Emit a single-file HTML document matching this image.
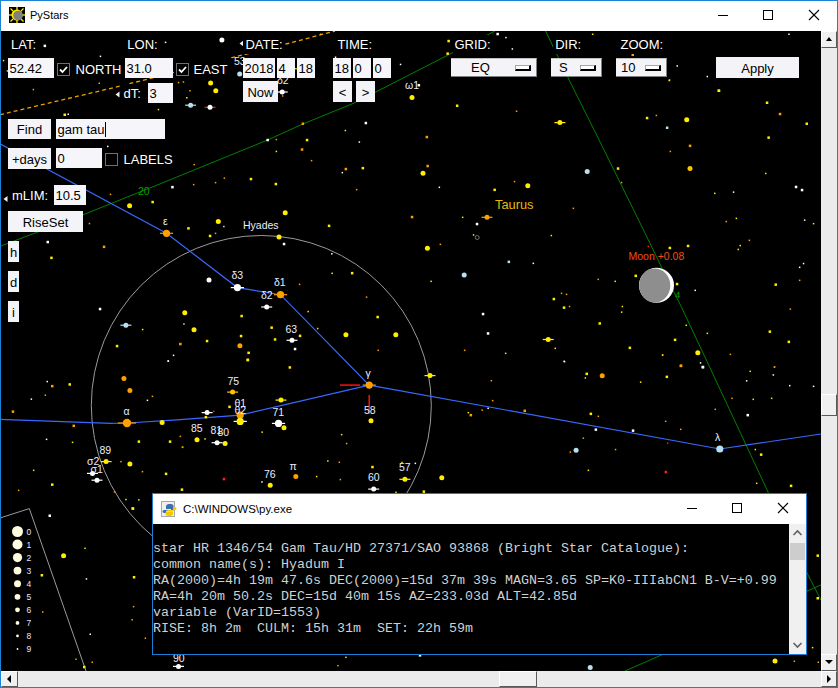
<!DOCTYPE html>
<html><head><meta charset="utf-8"><title>PyStars</title><style>
*{box-sizing:border-box}
html,body{margin:0;padding:0}
body{width:838px;height:688px;overflow:hidden;position:relative;background:#000;font-family:"Liberation Sans",sans-serif}
.a{position:absolute}
.lbl{position:absolute;color:#fff;font-size:13px;line-height:13px;white-space:nowrap;background:#000;padding:3px 2px;margin:-3px 0 0 -2px}
.ent{position:absolute;background:#f5f5fa;color:#000;font-size:13px;white-space:nowrap;padding-left:1.5px;overflow:hidden}
.btn{position:absolute;background:#f3f3f8;color:#000;font-size:13px;text-align:center;white-space:nowrap}
.chk{position:absolute;width:13px;height:13px;border:1px solid #707070;background:#000}
.om{position:absolute;background:#f3f3f8;border-top:1px solid #c0c0c0;border-right:1px solid #808080;border-bottom:1px solid #808080;color:#000;font-size:13px;white-space:nowrap}
.ind{position:absolute;width:16px;height:6px;border-top:1px solid #a8a8a8;border-left:1px solid #a8a8a8;border-right:2px solid #000;border-bottom:2px solid #000;background:#fff}
.mono{font-family:"Liberation Mono",monospace}
</style></head>
<body>
<svg width="838" height="688" viewBox="0 0 838 688" style="position:absolute;left:0;top:0" font-family="Liberation Sans, sans-serif">
<polyline points="0,114.7 115.6,87.2 288,43.5 335,31" fill="none" stroke="#f0a000" stroke-width="1.3" stroke-dasharray="4,3"/>
<polyline points="0,246.3 84,214.4 157,185.1 267.6,140 302.7,124 354.3,103 449,54.5 495,31" fill="none" stroke="#008000" stroke-width="1"/>
<polyline points="545.5,31 569.2,80 600,141.8 643,229 662.7,269.5 681,306.2 704,355 768.4,492.8 808,574.9 821,600" fill="none" stroke="#008000" stroke-width="1"/>
<line x1="625" y1="671" x2="830" y2="581" stroke="#008000" stroke-width="1"/>
<text x="138" y="195" font-size="10.5" fill="#00a000">20</text>
<text x="675" y="298" font-size="9.5" fill="#00a000">4</text>
<circle cx="261.3" cy="405.5" r="170" fill="none" stroke="#9a9a9a" stroke-width="1"/>
<polyline points="0,518 29.3,508.6 86,671" fill="none" stroke="#9a9a9a" stroke-width="1"/>
<polyline points="0,143.9 166.5,233.3 237.4,287.6 280.5,294.7 369.2,385.1 719.8,449 821,434" fill="none" stroke="#3868ff" stroke-width="1.2"/>
<polyline points="0,419.4 111,423.3 127,423 176.9,419.9 240.2,415.1 369.2,385.1" fill="none" stroke="#3868ff" stroke-width="1.2"/>
<line x1="340" y1="385.1" x2="360" y2="385.1" stroke="#ff1010" stroke-width="1.5"/>
<line x1="369.2" y1="395" x2="369.2" y2="414" stroke="#ff1010" stroke-width="1.5"/>
<rect x="43.6" y="44.6" width="2.5" height="2.5" fill="#ffffff"/>
<rect x="2.8" y="59.8" width="1.5" height="1.5" fill="#ffee00"/>
<rect x="6.7" y="70.2" width="1.5" height="1.5" fill="#ffee00"/>
<rect x="32.6" y="88.8" width="1.5" height="1.5" fill="#ffa000"/>
<rect x="98.5" y="82.5" width="1.5" height="1.5" fill="#ffa000"/>
<rect x="99.7" y="55.6" width="1.5" height="1.5" fill="#ffffff"/>
<rect x="63.5" y="113.5" width="2.5" height="2.5" fill="#ffee00"/>
<rect x="67.5" y="113.5" width="1.5" height="1.5" fill="#ffffff"/>
<rect x="164.8" y="41.6" width="1.5" height="1.5" fill="#ffffff"/>
<circle cx="221.9" cy="39.9" r="2.5" fill="#ffffff"/>
<circle cx="239.7" cy="73.9" r="2.5" fill="#b8e0f0"/>
<circle cx="210.6" cy="83.0" r="2.5" fill="#ffee00"/>
<circle cx="215.8" cy="90.7" r="2.5" fill="#ffee00"/>
<line x1="185.1" y1="105.2" x2="196.1" y2="105.2" stroke="#b8e0f0" stroke-width="1.2"/>
<circle cx="190.6" cy="105.2" r="2.5" fill="#b8e0f0"/>
<line x1="204.5" y1="107.3" x2="215.5" y2="107.3" stroke="#ff2020" stroke-width="1.2"/>
<circle cx="210.0" cy="107.3" r="2.5" fill="#ffffff"/>
<line x1="276.7" y1="92.0" x2="287.7" y2="92.0" stroke="#ffffff" stroke-width="1.2"/>
<circle cx="282.2" cy="92.0" r="2.5" fill="#ffffff"/>
<rect x="281.9" y="95.2" width="1.5" height="1.5" fill="#ffa000"/>
<rect x="295.2" y="68.0" width="1.5" height="1.5" fill="#ffee00"/>
<rect x="177.8" y="81.8" width="1.5" height="1.5" fill="#ffa000"/>
<rect x="182.7" y="81.2" width="1.5" height="1.5" fill="#ffa000"/>
<rect x="189.2" y="90.0" width="1.5" height="1.5" fill="#ffa000"/>
<rect x="186.1" y="97.0" width="1.5" height="1.5" fill="#ffee00"/>
<rect x="157.7" y="108.8" width="1.5" height="1.5" fill="#ffee00"/>
<rect x="107.0" y="145.7" width="1.5" height="1.5" fill="#ffffff"/>
<rect x="334.8" y="56.5" width="1.5" height="1.5" fill="#ffffff"/>
<rect x="319.9" y="33.5" width="1.5" height="1.5" fill="#ffa000"/>
<rect x="399.8" y="63.7" width="1.5" height="1.5" fill="#ffffff"/>
<rect x="417.6" y="84.0" width="2.5" height="2.5" fill="#ffffff"/>
<circle cx="412.0" cy="97.5" r="2.5" fill="#ffee00"/>
<rect x="455.9" y="104.5" width="2.5" height="2.5" fill="#ffee00"/>
<rect x="515.8" y="110.5" width="1.5" height="1.5" fill="#ffa000"/>
<line x1="554.4" y1="122.6" x2="565.4" y2="122.6" stroke="#ffee00" stroke-width="1.2"/>
<circle cx="559.9" cy="122.6" r="2.5" fill="#ffee00"/>
<rect x="425.6" y="135.8" width="2.5" height="2.5" fill="#ffa000"/>
<rect x="426.4" y="164.8" width="2.5" height="2.5" fill="#ffa000"/>
<circle cx="423.0" cy="173.2" r="2.5" fill="#ffee00"/>
<rect x="438.6" y="186.6" width="1.5" height="1.5" fill="#ffffff"/>
<rect x="513.8" y="180.8" width="1.5" height="1.5" fill="#ffa000"/>
<rect x="493.4" y="188.6" width="2.5" height="2.5" fill="#ffee00"/>
<circle cx="527.8" cy="185.8" r="2.5" fill="#ffee00"/>
<circle cx="587.2" cy="171.5" r="2.5" fill="#b8e0f0"/>
<rect x="572.6" y="207.6" width="1.5" height="1.5" fill="#ffa000"/>
<rect x="410.8" y="215.8" width="2.5" height="2.5" fill="#ffa000"/>
<rect x="461.9" y="216.6" width="1.5" height="1.5" fill="#ffee00"/>
<line x1="481.5" y1="217.3" x2="492.5" y2="217.3" stroke="#ffa000" stroke-width="1.2"/>
<circle cx="487.0" cy="217.3" r="2.5" fill="#ffa000"/>
<rect x="475.8" y="222.8" width="2.5" height="2.5" fill="#ffffff"/>
<rect x="668.5" y="79.8" width="1.5" height="1.5" fill="#ffee00"/>
<rect x="717.8" y="89.5" width="2.5" height="2.5" fill="#ffee00"/>
<rect x="765.8" y="101.5" width="2.5" height="2.5" fill="#ffee00"/>
<rect x="778.8" y="112.8" width="2.5" height="2.5" fill="#ffa000"/>
<rect x="805.5" y="122.5" width="2.5" height="2.5" fill="#ffee00"/>
<rect x="645.8" y="116.8" width="2.5" height="2.5" fill="#ffee00"/>
<rect x="655.6" y="114.7" width="1.5" height="1.5" fill="#ffa000"/>
<circle cx="686.7" cy="119.7" r="2.5" fill="#ffee00"/>
<rect x="665.9" y="126.5" width="2.5" height="2.5" fill="#b8e0f0"/>
<rect x="767.4" y="136.4" width="2.5" height="2.5" fill="#ffee00"/>
<rect x="688.8" y="144.6" width="2.5" height="2.5" fill="#ffa000"/>
<rect x="669.6" y="150.7" width="1.5" height="1.5" fill="#ffa000"/>
<rect x="616.8" y="167.3" width="2.5" height="2.5" fill="#ffee00"/>
<circle cx="690.0" cy="168.6" r="2.5" fill="#ffc400"/>
<rect x="620.8" y="181.8" width="1.5" height="1.5" fill="#ffa000"/>
<rect x="765.0" y="172.7" width="1.5" height="1.5" fill="#ffee00"/>
<rect x="794.8" y="185.7" width="2.5" height="2.5" fill="#ffffff"/>
<rect x="800.8" y="188.8" width="2.5" height="2.5" fill="#ffffff"/>
<rect x="714.0" y="192.6" width="1.5" height="1.5" fill="#ffee00"/>
<rect x="732.8" y="191.4" width="1.5" height="1.5" fill="#ffffff"/>
<rect x="725.5" y="220.8" width="1.5" height="1.5" fill="#ffa000"/>
<rect x="735.6" y="217.6" width="1.5" height="1.5" fill="#ffee00"/>
<rect x="803.9" y="219.4" width="1.5" height="1.5" fill="#ffffff"/>
<rect x="812.8" y="222.9" width="1.5" height="1.5" fill="#ffee00"/>
<rect x="447.4" y="39.8" width="2.5" height="2.5" fill="#ffee00"/>
<rect x="496.4" y="32.8" width="2.5" height="2.5" fill="#ffffff"/>
<rect x="511.6" y="48.2" width="1.5" height="1.5" fill="#ffffff"/>
<rect x="505.2" y="36.8" width="1.5" height="1.5" fill="#ffffff"/>
<rect x="528.5" y="61.9" width="1.5" height="1.5" fill="#ffffff"/>
<rect x="446.4" y="52.4" width="2.5" height="2.5" fill="#ffee00"/>
<rect x="592.2" y="60.2" width="1.5" height="1.5" fill="#ffee00"/>
<rect x="631.5" y="53.5" width="2.5" height="2.5" fill="#ffa000"/>
<rect x="591.9" y="33.5" width="1.5" height="1.5" fill="#ffee00"/>
<rect x="676.5" y="65.2" width="1.5" height="1.5" fill="#ffffff"/>
<rect x="668.8" y="79.3" width="1.5" height="1.5" fill="#ffee00"/>
<rect x="706.6" y="75.8" width="1.5" height="1.5" fill="#ffffff"/>
<rect x="717.5" y="89.5" width="2.5" height="2.5" fill="#ffee00"/>
<rect x="788.2" y="33.5" width="1.5" height="1.5" fill="#ffffff"/>
<circle cx="129.6" cy="205.8" r="2.5" fill="#ffee00"/>
<rect x="151.4" y="200.8" width="2.5" height="2.5" fill="#ffee00"/>
<rect x="171.2" y="185.9" width="2.5" height="2.5" fill="#ffffff"/>
<rect x="192.9" y="183.9" width="1.5" height="1.5" fill="#ffa000"/>
<rect x="109.7" y="193.6" width="1.5" height="1.5" fill="#ffa000"/>
<rect x="88.7" y="222.8" width="1.5" height="1.5" fill="#ffa000"/>
<rect x="187.2" y="227.1" width="2.5" height="2.5" fill="#ffee00"/>
<rect x="46.5" y="240.8" width="2.5" height="2.5" fill="#ffffff"/>
<rect x="102.8" y="245.6" width="2.5" height="2.5" fill="#ffa000"/>
<rect x="50.2" y="256.6" width="2.5" height="2.5" fill="#ffee00"/>
<rect x="193.4" y="163.9" width="1.5" height="1.5" fill="#ffa000"/>
<rect x="364.6" y="121.8" width="2.5" height="2.5" fill="#ffffff"/>
<rect x="301.6" y="122.5" width="2.5" height="2.5" fill="#ffa000"/>
<rect x="344.6" y="129.8" width="1.5" height="1.5" fill="#ffee00"/>
<rect x="266.4" y="138.8" width="2.5" height="2.5" fill="#ffffff"/>
<rect x="275.6" y="138.8" width="1.5" height="1.5" fill="#ffa000"/>
<rect x="305.8" y="138.8" width="2.5" height="2.5" fill="#ffee00"/>
<rect x="358.6" y="141.3" width="1.5" height="1.5" fill="#ffffff"/>
<rect x="300.8" y="148.3" width="2.5" height="2.5" fill="#ffa000"/>
<rect x="275.6" y="150.7" width="1.5" height="1.5" fill="#ffee00"/>
<rect x="310.8" y="159.9" width="1.5" height="1.5" fill="#ffa000"/>
<rect x="344.6" y="167.8" width="2.5" height="2.5" fill="#ffa000"/>
<rect x="361.6" y="166.9" width="2.5" height="2.5" fill="#ffee00"/>
<rect x="341.6" y="171.9" width="1.5" height="1.5" fill="#ffffff"/>
<rect x="355.9" y="188.9" width="1.5" height="1.5" fill="#ffa000"/>
<rect x="214.8" y="181.9" width="1.5" height="1.5" fill="#ffa000"/>
<rect x="223.6" y="177.4" width="1.5" height="1.5" fill="#ffa000"/>
<rect x="249.7" y="177.8" width="2.5" height="2.5" fill="#ffee00"/>
<rect x="274.6" y="182.8" width="2.5" height="2.5" fill="#ffee00"/>
<circle cx="285.2" cy="212.8" r="2.5" fill="#ffee00"/>
<circle cx="218.3" cy="221.6" r="2.5" fill="#ffee00"/>
<rect x="223.1" y="225.8" width="1.5" height="1.5" fill="#b8e0f0"/>
<rect x="208.8" y="234.7" width="2.5" height="2.5" fill="#ffee00"/>
<rect x="214.8" y="232.6" width="1.5" height="1.5" fill="#ffa000"/>
<rect x="327.8" y="224.6" width="2.5" height="2.5" fill="#ffee00"/>
<circle cx="279.0" cy="237.1" r="2.5" fill="#ffee00"/>
<rect x="282.8" y="242.8" width="2.5" height="2.5" fill="#ffffff"/>
<line x1="159.9" y1="233.3" x2="173.1" y2="233.3" stroke="#ffa000" stroke-width="1.2"/>
<circle cx="166.5" cy="233.3" r="3.6" fill="#ffa000"/>
<line x1="230.8" y1="287.6" x2="244.0" y2="287.6" stroke="#ffffff" stroke-width="1.2"/>
<circle cx="237.4" cy="287.6" r="3.6" fill="#ffffff"/>
<line x1="273.9" y1="294.7" x2="287.1" y2="294.7" stroke="#ffa000" stroke-width="1.2"/>
<circle cx="280.5" cy="294.7" r="3.6" fill="#ffa000"/>
<line x1="261.2" y1="307.0" x2="272.2" y2="307.0" stroke="#ffffff" stroke-width="1.2"/>
<circle cx="266.7" cy="307.0" r="2.5" fill="#ffffff"/>
<circle cx="209.0" cy="280.1" r="2.5" fill="#ffffff"/>
<rect x="103.0" y="246.2" width="1.5" height="1.5" fill="#ffa000"/>
<rect x="98.8" y="307.8" width="2.5" height="2.5" fill="#ffffff"/>
<line x1="120.4" y1="325.2" x2="131.4" y2="325.2" stroke="#b8e0f0" stroke-width="1.2"/>
<circle cx="125.9" cy="325.2" r="2.5" fill="#b8e0f0"/>
<circle cx="184.8" cy="312.7" r="2.5" fill="#ffee00"/>
<rect x="183.2" y="323.2" width="1.5" height="1.5" fill="#b8e0f0"/>
<circle cx="194.0" cy="329.7" r="2.5" fill="#ffee00"/>
<rect x="141.9" y="328.8" width="1.5" height="1.5" fill="#ffee00"/>
<rect x="115.8" y="344.8" width="2.5" height="2.5" fill="#ffee00"/>
<rect x="179.1" y="342.8" width="2.5" height="2.5" fill="#ffa000"/>
<rect x="205.8" y="339.8" width="2.5" height="2.5" fill="#ffee00"/>
<rect x="240.4" y="314.8" width="2.5" height="2.5" fill="#ffee00"/>
<rect x="239.8" y="334.8" width="2.5" height="2.5" fill="#ffee00"/>
<circle cx="239.9" cy="345.8" r="2.5" fill="#ffa000"/>
<rect x="247.4" y="351.6" width="2.5" height="2.5" fill="#ffee00"/>
<rect x="246.7" y="358.6" width="2.5" height="2.5" fill="#ffee00"/>
<rect x="172.8" y="354.6" width="1.5" height="1.5" fill="#ffffff"/>
<rect x="167.4" y="360.2" width="1.5" height="1.5" fill="#ffffff"/>
<rect x="270.4" y="326.4" width="2.5" height="2.5" fill="#ffee00"/>
<rect x="273.8" y="338.2" width="2.5" height="2.5" fill="#ffee00"/>
<circle cx="123.9" cy="378.6" r="2.5" fill="#ffa000"/>
<rect x="331.1" y="253.1" width="1.5" height="1.5" fill="#ffffff"/>
<rect x="331.4" y="272.6" width="1.5" height="1.5" fill="#ffee00"/>
<rect x="350.9" y="271.9" width="2.5" height="2.5" fill="#ffee00"/>
<rect x="298.8" y="283.6" width="1.5" height="1.5" fill="#ffa000"/>
<rect x="365.8" y="296.4" width="1.5" height="1.5" fill="#ffa000"/>
<rect x="307.4" y="310.8" width="1.5" height="1.5" fill="#ffee00"/>
<rect x="376.4" y="315.8" width="2.5" height="2.5" fill="#ffee00"/>
<line x1="286.5" y1="340.3" x2="297.5" y2="340.3" stroke="#ffffff" stroke-width="1.2"/>
<circle cx="292.0" cy="340.3" r="2.5" fill="#ffffff"/>
<rect x="298.8" y="334.6" width="2.5" height="2.5" fill="#ffee00"/>
<rect x="293.8" y="347.8" width="2.5" height="2.5" fill="#ffffff"/>
<rect x="316.9" y="327.8" width="1.5" height="1.5" fill="#ffee00"/>
<circle cx="345.9" cy="334.8" r="2.5" fill="#ffee00"/>
<circle cx="395.8" cy="334.8" r="2.5" fill="#ffee00"/>
<rect x="377.4" y="349.6" width="1.5" height="1.5" fill="#ffa000"/>
<rect x="288.6" y="366.2" width="2.5" height="2.5" fill="#ffee00"/>
<circle cx="427.4" cy="248.3" r="2.5" fill="#ffee00"/>
<rect x="439.6" y="243.6" width="1.5" height="1.5" fill="#ffa000"/>
<circle cx="464.2" cy="275.1" r="2.5" fill="#b8e0f0"/>
<rect x="430.4" y="280.6" width="1.5" height="1.5" fill="#ffee00"/>
<rect x="481.8" y="312.8" width="2.5" height="2.5" fill="#ffffff"/>
<rect x="486.8" y="332.2" width="2.5" height="2.5" fill="#ffffff"/>
<rect x="463.9" y="349.6" width="1.5" height="1.5" fill="#ffa000"/>
<rect x="472.8" y="234.2" width="1.5" height="1.5" fill="#ffee00"/>
<rect x="507.6" y="260.6" width="2.5" height="2.5" fill="#b8e0f0"/>
<rect x="532.6" y="262.6" width="1.5" height="1.5" fill="#ffffff"/>
<rect x="550.6" y="234.8" width="1.5" height="1.5" fill="#ffee00"/>
<rect x="597.5" y="278.6" width="1.5" height="1.5" fill="#ffa000"/>
<rect x="614.5" y="280.6" width="1.5" height="1.5" fill="#ffee00"/>
<rect x="560.8" y="292.6" width="1.5" height="1.5" fill="#ffa000"/>
<rect x="565.8" y="293.6" width="1.5" height="1.5" fill="#ffa000"/>
<rect x="552.6" y="297.8" width="2.5" height="2.5" fill="#ffee00"/>
<rect x="562.8" y="306.4" width="2.5" height="2.5" fill="#ffee00"/>
<rect x="568.8" y="305.8" width="1.5" height="1.5" fill="#ffa000"/>
<rect x="621.6" y="305.8" width="1.5" height="1.5" fill="#ffee00"/>
<rect x="620.9" y="311.4" width="1.5" height="1.5" fill="#ffee00"/>
<rect x="598.5" y="322.2" width="2.5" height="2.5" fill="#ffee00"/>
<line x1="542.7" y1="339.5" x2="553.7" y2="339.5" stroke="#ffee00" stroke-width="1.2"/>
<circle cx="548.2" cy="339.5" r="2.5" fill="#ffee00"/>
<rect x="554.5" y="347.6" width="1.5" height="1.5" fill="#ffee00"/>
<rect x="504.9" y="352.6" width="1.5" height="1.5" fill="#ffee00"/>
<rect x="563.8" y="360.9" width="1.5" height="1.5" fill="#ffffff"/>
<rect x="628.6" y="346.6" width="2.5" height="2.5" fill="#ffee00"/>
<rect x="673.8" y="338.6" width="2.5" height="2.5" fill="#ffee00"/>
<rect x="661.8" y="354.6" width="1.5" height="1.5" fill="#ffa000"/>
<rect x="679.8" y="364.6" width="2.5" height="2.5" fill="#ffa000"/>
<rect x="685.5" y="324.6" width="1.5" height="1.5" fill="#ffee00"/>
<rect x="634.5" y="274.6" width="2.5" height="2.5" fill="#ffee00"/>
<rect x="668.6" y="246.7" width="2.5" height="2.5" fill="#ffee00"/>
<rect x="686.8" y="244.7" width="2.5" height="2.5" fill="#ffee00"/>
<rect x="675.8" y="282.8" width="2.5" height="2.5" fill="#ffee00"/>
<rect x="647.5" y="245.7" width="1.5" height="1.5" fill="#ff2020"/>
<rect x="694.5" y="289.6" width="1.5" height="1.5" fill="#ffffff"/>
<rect x="748.6" y="239.6" width="1.5" height="1.5" fill="#ffa000"/>
<rect x="739.5" y="244.8" width="1.5" height="1.5" fill="#ffee00"/>
<rect x="737.5" y="248.7" width="1.5" height="1.5" fill="#ffee00"/>
<rect x="802.8" y="262.8" width="1.5" height="1.5" fill="#ffffff"/>
<rect x="798.9" y="266.6" width="1.5" height="1.5" fill="#ffffff"/>
<rect x="798.9" y="279.6" width="1.5" height="1.5" fill="#ffa000"/>
<rect x="774.5" y="283.4" width="2.5" height="2.5" fill="#ffee00"/>
<rect x="789.6" y="308.4" width="1.5" height="1.5" fill="#ffa000"/>
<rect x="706.6" y="332.6" width="1.5" height="1.5" fill="#ffee00"/>
<rect x="768.6" y="330.4" width="2.5" height="2.5" fill="#ffee00"/>
<rect x="787.6" y="340.6" width="2.5" height="2.5" fill="#ffee00"/>
<circle cx="697.8" cy="352.7" r="2.5" fill="#ffee00"/>
<rect x="729.6" y="353.6" width="1.5" height="1.5" fill="#ffa000"/>
<rect x="699.8" y="362.2" width="1.5" height="1.5" fill="#ffffff"/>
<rect x="701.8" y="365.9" width="2.5" height="2.5" fill="#ffffff"/>
<rect x="773.6" y="366.4" width="1.5" height="1.5" fill="#ffa000"/>
<line x1="362.6" y1="385.1" x2="375.8" y2="385.1" stroke="#ffa000" stroke-width="1.2"/>
<circle cx="369.2" cy="385.1" r="3.6" fill="#ffa000"/>
<circle cx="371.0" cy="420.7" r="2.5" fill="#ffee00"/>
<line x1="227.1" y1="392.1" x2="238.1" y2="392.1" stroke="#ffc400" stroke-width="1.2"/>
<circle cx="232.6" cy="392.1" r="2.5" fill="#ffc400"/>
<rect x="228.3" y="405.6" width="2.5" height="2.5" fill="#ffee00"/>
<circle cx="240.2" cy="415.1" r="3.6" fill="#ffa000"/>
<line x1="233.6" y1="421.4" x2="246.8" y2="421.4" stroke="#ffffff" stroke-width="1.2"/>
<circle cx="240.2" cy="421.4" r="3.6" fill="#ffee00"/>
<line x1="201.6" y1="412.6" x2="212.6" y2="412.6" stroke="#ffffff" stroke-width="1.2"/>
<circle cx="207.1" cy="412.6" r="2.5" fill="#ffffff"/>
<rect x="213.1" y="410.6" width="1.5" height="1.5" fill="#ff2020"/>
<rect x="204.6" y="415.9" width="2.5" height="2.5" fill="#ffee00"/>
<line x1="275.5" y1="400.1" x2="286.5" y2="400.1" stroke="#ffee00" stroke-width="1.2"/>
<circle cx="281.0" cy="400.1" r="2.5" fill="#ffee00"/>
<line x1="271.9" y1="423.4" x2="285.1" y2="423.4" stroke="#ffffff" stroke-width="1.2"/>
<circle cx="278.5" cy="423.4" r="3.6" fill="#ffffff"/>
<circle cx="284.0" cy="427.7" r="2.5" fill="#ffee00"/>
<circle cx="197.0" cy="439.7" r="2.5" fill="#ffee00"/>
<rect x="204.3" y="438.2" width="1.5" height="1.5" fill="#ffee00"/>
<line x1="211.6" y1="442.7" x2="222.6" y2="442.7" stroke="#ffffff" stroke-width="1.2"/>
<circle cx="217.1" cy="442.7" r="2.5" fill="#ffffff"/>
<circle cx="225.1" cy="443.5" r="2.5" fill="#ffee00"/>
<rect x="261.4" y="431.4" width="1.5" height="1.5" fill="#ffee00"/>
<rect x="340.9" y="433.9" width="1.5" height="1.5" fill="#ffee00"/>
<rect x="345.9" y="442.8" width="1.5" height="1.5" fill="#ffa000"/>
<rect x="327.1" y="460.2" width="1.5" height="1.5" fill="#ffee00"/>
<rect x="338.6" y="461.6" width="1.5" height="1.5" fill="#ffa000"/>
<circle cx="295.8" cy="476.5" r="2.5" fill="#ffa000"/>
<circle cx="270.2" cy="485.3" r="2.5" fill="#ffee00"/>
<rect x="261.2" y="481.2" width="1.5" height="1.5" fill="#ffffff"/>
<rect x="222.7" y="477.8" width="2.5" height="2.5" fill="#ff2020"/>
<rect x="315.9" y="475.8" width="1.5" height="1.5" fill="#ffee00"/>
<rect x="339.6" y="478.8" width="1.5" height="1.5" fill="#ffa000"/>
<rect x="371.2" y="465.8" width="2.5" height="2.5" fill="#ffee00"/>
<line x1="368.2" y1="489.1" x2="379.2" y2="489.1" stroke="#ffffff" stroke-width="1.2"/>
<circle cx="373.7" cy="489.1" r="2.5" fill="#ffffff"/>
<rect x="181.2" y="488.9" width="1.5" height="1.5" fill="#ffee00"/>
<rect x="181.8" y="446.4" width="1.5" height="1.5" fill="#ffee00"/>
<rect x="246.4" y="358.8" width="2.5" height="2.5" fill="#ffee00"/>
<line x1="117.8" y1="423.0" x2="136.2" y2="423.0" stroke="#ffa000" stroke-width="1.2"/>
<circle cx="127.0" cy="423.0" r="4.2" fill="#ffa000"/>
<circle cx="162.1" cy="422.4" r="2.5" fill="#ffee00"/>
<circle cx="129.9" cy="390.6" r="2.5" fill="#ffa000"/>
<rect x="146.7" y="399.6" width="1.5" height="1.5" fill="#ffffff"/>
<rect x="151.7" y="395.6" width="1.5" height="1.5" fill="#ffa000"/>
<rect x="167.6" y="360.4" width="1.5" height="1.5" fill="#ffffff"/>
<rect x="46.5" y="380.8" width="1.5" height="1.5" fill="#ffffff"/>
<rect x="51.0" y="384.9" width="2.5" height="2.5" fill="#ffa000"/>
<rect x="68.5" y="383.2" width="2.5" height="2.5" fill="#ffee00"/>
<rect x="44.6" y="394.4" width="1.5" height="1.5" fill="#ffa000"/>
<rect x="30.6" y="398.4" width="1.5" height="1.5" fill="#ffffff"/>
<rect x="11.7" y="410.4" width="2.5" height="2.5" fill="#ffa000"/>
<rect x="72.5" y="424.6" width="2.5" height="2.5" fill="#ffa000"/>
<rect x="45.8" y="438.6" width="1.5" height="1.5" fill="#ffffff"/>
<rect x="71.8" y="441.6" width="1.5" height="1.5" fill="#ffee00"/>
<rect x="137.6" y="440.4" width="2.5" height="2.5" fill="#ffee00"/>
<rect x="168.8" y="440.4" width="2.5" height="2.5" fill="#ffee00"/>
<rect x="179.6" y="435.6" width="1.5" height="1.5" fill="#ffa000"/>
<rect x="181.8" y="446.6" width="1.5" height="1.5" fill="#ffa000"/>
<line x1="100.6" y1="461.6" x2="111.6" y2="461.6" stroke="#ffee00" stroke-width="1.2"/>
<circle cx="106.1" cy="461.6" r="2.5" fill="#ffee00"/>
<line x1="87.0" y1="473.4" x2="98.0" y2="473.4" stroke="#ffffff" stroke-width="1.2"/>
<circle cx="92.5" cy="473.4" r="2.5" fill="#ffffff"/>
<line x1="91.5" y1="480.2" x2="102.5" y2="480.2" stroke="#ffffff" stroke-width="1.2"/>
<circle cx="97.0" cy="480.2" r="2.5" fill="#ffffff"/>
<rect x="120.2" y="460.9" width="1.5" height="1.5" fill="#ffa000"/>
<circle cx="129.9" cy="463.9" r="2.5" fill="#ffee00"/>
<rect x="141.7" y="470.9" width="1.5" height="1.5" fill="#ffa000"/>
<rect x="164.8" y="472.6" width="2.5" height="2.5" fill="#ffee00"/>
<rect x="32.9" y="469.6" width="1.5" height="1.5" fill="#ffee00"/>
<rect x="51.0" y="483.4" width="2.5" height="2.5" fill="#ffee00"/>
<rect x="17.9" y="489.6" width="1.5" height="1.5" fill="#ffa000"/>
<rect x="180.7" y="488.4" width="2.5" height="2.5" fill="#ffee00"/>
<rect x="138.1" y="499.1" width="1.5" height="1.5" fill="#ffee00"/>
<rect x="113.8" y="491.2" width="1.5" height="1.5" fill="#ffa000"/>
<rect x="125.2" y="498.8" width="1.5" height="1.5" fill="#ffee00"/>
<rect x="131.4" y="507.2" width="2.5" height="2.5" fill="#ffee00"/>
<rect x="48.5" y="514.5" width="2.5" height="2.5" fill="#ffffff"/>
<circle cx="63.6" cy="555.8" r="2.5" fill="#ffee00"/>
<rect x="84.3" y="547.6" width="1.5" height="1.5" fill="#ffee00"/>
<rect x="40.6" y="574.0" width="2.5" height="2.5" fill="#ffee00"/>
<rect x="85.7" y="578.2" width="1.5" height="1.5" fill="#ffffff"/>
<rect x="132.8" y="576.0" width="2.5" height="2.5" fill="#ffee00"/>
<rect x="42.0" y="611.2" width="1.5" height="1.5" fill="#ffa000"/>
<rect x="132.8" y="605.9" width="1.5" height="1.5" fill="#ffa000"/>
<rect x="131.4" y="619.0" width="1.5" height="1.5" fill="#ffa000"/>
<rect x="89.5" y="633.5" width="1.5" height="1.5" fill="#ffffff"/>
<rect x="144.6" y="637.5" width="1.5" height="1.5" fill="#ffa000"/>
<rect x="75.2" y="658.5" width="1.5" height="1.5" fill="#ffa000"/>
<rect x="91.5" y="661.5" width="1.5" height="1.5" fill="#ffa000"/>
<rect x="83.0" y="665.8" width="2.5" height="2.5" fill="#ffee00"/>
<rect x="131.8" y="507.4" width="2.5" height="2.5" fill="#ffee00"/>
<line x1="424.5" y1="375.6" x2="435.5" y2="375.6" stroke="#ffee00" stroke-width="1.2"/>
<circle cx="430.0" cy="375.6" r="2.5" fill="#ffee00"/>
<rect x="563.4" y="360.6" width="1.5" height="1.5" fill="#ffffff"/>
<rect x="585.5" y="372.6" width="2.5" height="2.5" fill="#ffee00"/>
<rect x="584.6" y="377.2" width="1.5" height="1.5" fill="#ffee00"/>
<circle cx="602.2" cy="375.8" r="2.5" fill="#ffa000"/>
<rect x="490.6" y="379.9" width="1.5" height="1.5" fill="#ffa000"/>
<rect x="491.9" y="399.9" width="1.5" height="1.5" fill="#ffa000"/>
<rect x="467.6" y="411.9" width="1.5" height="1.5" fill="#ffee00"/>
<rect x="469.6" y="413.9" width="2.5" height="2.5" fill="#ffa000"/>
<rect x="481.4" y="409.4" width="1.5" height="1.5" fill="#ffa000"/>
<rect x="487.4" y="407.6" width="1.5" height="1.5" fill="#ffffff"/>
<rect x="523.5" y="409.6" width="2.5" height="2.5" fill="#ffa000"/>
<rect x="589.6" y="412.6" width="2.5" height="2.5" fill="#ffee00"/>
<rect x="597.6" y="415.6" width="1.5" height="1.5" fill="#ffa000"/>
<rect x="594.6" y="428.4" width="2.5" height="2.5" fill="#ffffff"/>
<rect x="582.6" y="437.4" width="1.5" height="1.5" fill="#ffa000"/>
<circle cx="576.1" cy="450.2" r="2.5" fill="#b8e0f0"/>
<rect x="569.6" y="451.4" width="1.5" height="1.5" fill="#ffa000"/>
<rect x="614.8" y="448.8" width="1.5" height="1.5" fill="#ffa000"/>
<rect x="587.6" y="469.6" width="1.5" height="1.5" fill="#ffee00"/>
<circle cx="441.8" cy="477.8" r="2.5" fill="#ffee00"/>
<rect x="422.6" y="490.4" width="2.5" height="2.5" fill="#ffee00"/>
<circle cx="719.8" cy="449.0" r="3.6" fill="#b8e0f0"/>
<rect x="661.9" y="354.2" width="1.5" height="1.5" fill="#ffee00"/>
<rect x="679.6" y="364.6" width="2.5" height="2.5" fill="#ffa000"/>
<rect x="665.6" y="375.6" width="2.5" height="2.5" fill="#ffee00"/>
<rect x="639.9" y="381.4" width="1.5" height="1.5" fill="#ffee00"/>
<rect x="701.5" y="365.8" width="2.5" height="2.5" fill="#ffffff"/>
<rect x="749.5" y="370.6" width="1.5" height="1.5" fill="#ffee00"/>
<rect x="773.9" y="366.2" width="1.5" height="1.5" fill="#ffa000"/>
<rect x="772.6" y="374.2" width="1.5" height="1.5" fill="#ffffff"/>
<rect x="745.9" y="380.1" width="1.5" height="1.5" fill="#ffffff"/>
<rect x="789.0" y="384.9" width="1.5" height="1.5" fill="#ffffff"/>
<rect x="812.8" y="385.6" width="1.5" height="1.5" fill="#ffffff"/>
<rect x="731.2" y="397.6" width="1.5" height="1.5" fill="#ffa000"/>
<rect x="752.5" y="398.6" width="1.5" height="1.5" fill="#ffee00"/>
<rect x="770.9" y="397.6" width="1.5" height="1.5" fill="#ffee00"/>
<rect x="714.5" y="408.6" width="1.5" height="1.5" fill="#ffa000"/>
<rect x="746.5" y="413.9" width="2.5" height="2.5" fill="#ffffff"/>
<rect x="664.9" y="420.6" width="1.5" height="1.5" fill="#ffa000"/>
<rect x="680.0" y="428.6" width="1.5" height="1.5" fill="#ffa000"/>
<rect x="631.8" y="429.4" width="2.5" height="2.5" fill="#ffffff"/>
<rect x="666.9" y="442.4" width="1.5" height="1.5" fill="#ff2020"/>
<rect x="759.9" y="453.4" width="2.5" height="2.5" fill="#ffee00"/>
<rect x="754.6" y="448.8" width="1.5" height="1.5" fill="#ffee00"/>
<rect x="664.6" y="470.8" width="2.5" height="2.5" fill="#ff2020"/>
<rect x="755.9" y="482.6" width="1.5" height="1.5" fill="#ffee00"/>
<rect x="789.8" y="484.6" width="2.5" height="2.5" fill="#ffee00"/>
<rect x="816.5" y="554.4" width="2.5" height="2.5" fill="#ffee00"/>
<rect x="816.5" y="597.0" width="2.5" height="2.5" fill="#ffee00"/>
<rect x="811.8" y="646.9" width="1.5" height="1.5" fill="#ffee00"/>
<line x1="173.0" y1="666.4" x2="184.0" y2="666.4" stroke="#ffffff" stroke-width="1.2"/>
<circle cx="178.5" cy="666.4" r="2.5" fill="#ffffff"/>
<rect x="345.2" y="656.6" width="1.5" height="1.5" fill="#ffee00"/>
<rect x="337.2" y="664.9" width="1.5" height="1.5" fill="#ffa000"/>
<rect x="418.8" y="654.1" width="2.5" height="2.5" fill="#ffffff"/>
<circle cx="590.2" cy="667.4" r="2.5" fill="#b8e0f0"/>
<circle cx="775.0" cy="661.0" r="2.5" fill="#ffee00"/>
<rect x="793.6" y="660.5" width="1.5" height="1.5" fill="#ffa000"/>
<rect x="817.5" y="661.5" width="1.5" height="1.5" fill="#ffa000"/>
<line x1="399.4" y1="479.3" x2="410.4" y2="479.3" stroke="#ffee00" stroke-width="1.2"/>
<circle cx="404.9" cy="479.3" r="2.5" fill="#ffee00"/>
<rect x="414.6" y="462.6" width="1.5" height="1.5" fill="#ffffff"/>
<rect x="401.2" y="461.8" width="1.5" height="1.5" fill="#ffee00"/>
<rect x="395.2" y="491.6" width="1.5" height="1.5" fill="#ffee00"/>
<circle cx="477.2" cy="237.5" r="2" fill="none" stroke="#909090" stroke-width="0.8"/>
<circle cx="656.5" cy="285.3" r="17.5" fill="#ffffff"/>
<ellipse cx="654.7" cy="285.6" rx="15.6" ry="17" fill="#8e8e8e"/>
<text x="628.5" y="260" font-size="10.5" fill="#f05010">Moon +0.08</text>
<text x="495" y="208.6" font-size="12.8" fill="#e6bc00">Taurus</text>
<text x="163" y="225" font-size="10.5" fill="#e8eeff" text-anchor="start">ε</text>
<text x="243" y="228.5" font-size="10.5" fill="#e8eeff" text-anchor="start">Hyades</text>
<text x="231.5" y="279" font-size="10.5" fill="#e8eeff" text-anchor="start">δ3</text>
<text x="274" y="286" font-size="10.5" fill="#e8eeff" text-anchor="start">δ1</text>
<text x="261" y="298.5" font-size="10.5" fill="#e8eeff" text-anchor="start">δ2</text>
<text x="285.5" y="332.5" font-size="10.5" fill="#e8eeff" text-anchor="start">63</text>
<text x="227.5" y="384.5" font-size="10.5" fill="#e8eeff" text-anchor="start">75</text>
<text x="234.5" y="406.5" font-size="10.5" fill="#e8eeff" text-anchor="start">θ1</text>
<text x="234.5" y="413.5" font-size="10.5" fill="#e8eeff" text-anchor="start">θ2</text>
<text x="272.5" y="415.5" font-size="10.5" fill="#e8eeff" text-anchor="start">71</text>
<text x="365.5" y="377" font-size="10.5" fill="#e8eeff" text-anchor="start">γ</text>
<text x="364" y="413.5" font-size="10.5" fill="#e8eeff" text-anchor="start">58</text>
<text x="191" y="431.5" font-size="10.5" fill="#e8eeff" text-anchor="start">85</text>
<text x="210.5" y="434" font-size="10.5" fill="#e8eeff" text-anchor="start">81</text>
<text x="217.5" y="435.5" font-size="10.5" fill="#e8eeff" text-anchor="start">80</text>
<text x="289.5" y="469.5" font-size="10.5" fill="#e8eeff" text-anchor="start">π</text>
<text x="264" y="477.5" font-size="10.5" fill="#e8eeff" text-anchor="start">76</text>
<text x="368" y="480.5" font-size="10.5" fill="#e8eeff" text-anchor="start">60</text>
<text x="123.5" y="414.5" font-size="10.5" fill="#e8eeff" text-anchor="start">α</text>
<text x="99.5" y="453.5" font-size="10.5" fill="#e8eeff" text-anchor="start">89</text>
<text x="87" y="465" font-size="10.5" fill="#e8eeff" text-anchor="start">σ2</text>
<text x="90.5" y="473" font-size="10.5" fill="#e8eeff" text-anchor="start">σ1</text>
<text x="715" y="441" font-size="10.5" fill="#e8eeff" text-anchor="start">λ</text>
<text x="405" y="89" font-size="10.5" fill="#e8eeff" text-anchor="start">ω1</text>
<text x="173" y="662" font-size="10.5" fill="#e8eeff" text-anchor="start">90</text>
<text x="234" y="64.5" font-size="10.5" fill="#e8eeff" text-anchor="start">53</text>
<text x="277" y="83.5" font-size="10.5" fill="#e8eeff" text-anchor="start">δ2</text>
<text x="399" y="471" font-size="10.5" fill="#e8eeff" text-anchor="start">57</text>
<polygon points="115.5,94.5 119.5,91.5 119.5,97.5" fill="#f0f0f0"/>
<polygon points="239.5,43.5 243.5,40.5 243.5,46.5" fill="#f0f0f0"/>
<polygon points="3.5,199 7.5,196 7.5,202" fill="#f0f0f0"/>
<circle cx="17.5" cy="531.5" r="5.5" fill="#fffde0"/>
<text x="26.5" y="534.7" font-size="8.5" fill="#e0e8ff">0</text>
<circle cx="17.5" cy="544.5" r="5.0" fill="#fffde0"/>
<text x="26.5" y="547.8" font-size="8.5" fill="#e0e8ff">1</text>
<circle cx="17.5" cy="557.6" r="4.6" fill="#fffde0"/>
<text x="26.5" y="560.8" font-size="8.5" fill="#e0e8ff">2</text>
<circle cx="17.5" cy="570.6" r="3.9" fill="#fffde0"/>
<text x="26.5" y="573.9" font-size="8.5" fill="#e0e8ff">3</text>
<circle cx="17.5" cy="583.7" r="3.5" fill="#fffde0"/>
<text x="26.5" y="586.9" font-size="8.5" fill="#e0e8ff">4</text>
<circle cx="17.5" cy="596.8" r="2.9" fill="#fffde0"/>
<text x="26.5" y="600.0" font-size="8.5" fill="#e0e8ff">5</text>
<circle cx="17.5" cy="609.8" r="2.4" fill="#fffde0"/>
<text x="26.5" y="613.0" font-size="8.5" fill="#e0e8ff">6</text>
<circle cx="17.5" cy="622.9" r="1.9" fill="#fffde0"/>
<text x="26.5" y="626.1" font-size="8.5" fill="#e0e8ff">7</text>
<circle cx="17.5" cy="635.9" r="1.4" fill="#fffde0"/>
<text x="26.5" y="639.1" font-size="8.5" fill="#e0e8ff">8</text>
<circle cx="17.5" cy="649.0" r="0.9" fill="#fffde0"/>
<text x="26.5" y="652.2" font-size="8.5" fill="#e0e8ff">9</text>
</svg>
<div class="lbl" style="left:11px;top:38px;font-size:13px;color:#fff">LAT:</div>
<div class="lbl" style="left:127.3px;top:38px;font-size:13px;color:#fff">LON:</div>
<div class="lbl" style="left:245.4px;top:38px;font-size:13px;color:#fff">DATE:</div>
<div class="lbl" style="left:337.4px;top:38px;font-size:13px;color:#fff">TIME:</div>
<div class="lbl" style="left:454.5px;top:38px;font-size:13px;color:#fff">GRID:</div>
<div class="lbl" style="left:555.2px;top:38px;font-size:13px;color:#fff">DIR:</div>
<div class="lbl" style="left:620.5px;top:38px;font-size:13px;color:#fff">ZOOM:</div>
<div class="ent" style="left:8px;top:58px;width:46px;height:20px;line-height:22px;">52.42</div>
<div class="ent" style="left:125px;top:58px;width:48px;height:20px;line-height:22px;">31.0</div>
<div class="ent" style="left:243px;top:58px;width:32px;height:20px;line-height:22px;">2018</div>
<div class="ent" style="left:277px;top:58px;width:18px;height:20px;line-height:22px;">4</div>
<div class="ent" style="left:297px;top:58px;width:18px;height:20px;line-height:22px;">18</div>
<div class="ent" style="left:333px;top:58px;width:18px;height:20px;line-height:22px;">18</div>
<div class="ent" style="left:353px;top:58px;width:18px;height:20px;line-height:22px;">0</div>
<div class="ent" style="left:373px;top:58px;width:18px;height:20px;line-height:22px;">0</div>
<div class="a" style="left:55px;top:58px;width:67px;height:20px;background:#000"></div>
<div class="a" style="left:174px;top:58px;width:58px;height:20px;background:#000"></div>
<div class="a" style="left:103px;top:148px;width:73px;height:20px;background:#000"></div>
<div class="chk" style="left:57px;top:63px"><svg width="11" height="11" style="position:absolute;left:0;top:0"><polyline points="2,5.5 4.5,8 9,3" fill="none" stroke="#fff" stroke-width="1.8"/></svg></div>
<div class="chk" style="left:176px;top:63px"><svg width="11" height="11" style="position:absolute;left:0;top:0"><polyline points="2,5.5 4.5,8 9,3" fill="none" stroke="#fff" stroke-width="1.8"/></svg></div>
<div class="lbl" style="left:75.5px;top:62.5px;font-size:13px;color:#fff">NORTH</div>
<div class="lbl" style="left:193.5px;top:62.5px;font-size:13px;color:#fff">EAST</div>
<div class="lbl" style="left:123.5px;top:87px;font-size:13px;color:#fff">dT:</div>
<div class="ent" style="left:148px;top:83px;width:25px;height:20px;line-height:22px;">3</div>
<div class="btn" style="left:243px;top:81px;width:35px;height:21px;line-height:23px;">Now</div>
<div class="btn" style="left:333px;top:81px;width:19px;height:21px;line-height:23px;">&lt;</div>
<div class="btn" style="left:356px;top:81px;width:19px;height:21px;line-height:23px;">&gt;</div>
<div class="om" style="left:451px;top:58px;width:86px;height:19px;line-height:19px"><span class="a" style="left:20px;top:-1px">EQ</span><div class="ind" style="left:64px;top:6px"></div></div>
<div class="om" style="left:551px;top:58px;width:51px;height:19px;line-height:19px"><span class="a" style="left:8px;top:-1px">S</span><div class="ind" style="left:29px;top:6px"></div></div>
<div class="om" style="left:616px;top:58px;width:51px;height:19px;line-height:19px"><span class="a" style="left:5px;top:-1px">10</span><div class="ind" style="left:29px;top:6px"></div></div>
<div class="btn" style="left:716px;top:57px;width:83px;height:21px;line-height:23px;">Apply</div>
<div class="btn" style="left:8px;top:119px;width:43px;height:20px;line-height:22px;">Find</div>
<div class="ent" style="left:56px;top:119px;width:109px;height:20px;line-height:22px;">gam tau<span style="display:inline-block;width:1.5px;height:15px;background:#000;vertical-align:-3px;margin-left:0.5px"></span></div>
<div class="btn" style="left:8px;top:148px;width:43px;height:21px;line-height:23px;">+days</div>
<div class="ent" style="left:56px;top:148px;width:46px;height:20px;line-height:22px;">0</div>
<div class="chk" style="left:105px;top:153px"></div>
<div class="lbl" style="left:123.5px;top:152.5px;font-size:13px;color:#fff">LABELS</div>
<div class="lbl" style="left:12px;top:189px;font-size:13px;color:#fff">mLIM:</div>
<div class="ent" style="left:54px;top:185px;width:32px;height:20px;line-height:22px;">10.5</div>
<div class="btn" style="left:8px;top:211px;width:75px;height:21px;line-height:23px;">RiseSet</div>
<div class="btn" style="left:8px;top:241px;width:11px;height:21px;line-height:23px;">h</div>
<div class="btn" style="left:8px;top:271px;width:11px;height:21px;line-height:23px;">d</div>
<div class="btn" style="left:8px;top:301px;width:11px;height:21px;line-height:23px;">i</div>
<div class="a" style="left:152px;top:493px;width:655px;height:162px;border:1px solid #1a7fd4;background:#000;overflow:hidden">
<div class="a" style="left:0;top:0;width:653px;height:30px;background:#fff"></div>
<svg class="a" style="left:8px;top:7px" width="17" height="17" viewBox="0 0 17 17"><rect x="0.5" y="0.5" width="13" height="15" fill="#eee" stroke="#aaa"/><path d="M9 3 C5 3 5 5 5 6 L5 8 L10 8 L10 9 L3 9 C1 9 1 12 3 12 L5 12 L5 10.5 C5 9.5 6 9.5 7 9.5 L11 9.5 C12 9.5 12.5 9 12.5 8 L12.5 5 C12.5 3.5 11 3 9 3Z" fill="#3a70b0"/><path d="M8 15 C12 15 12 13 12 12 L12 10 L7 10 L7 9 L14 9 C16 9 16 6 14 6 L12.5 6 L12.5 9.5 C12.5 10.5 11 10.5 10 10.5 L6 10.5 C5 10.5 4.5 11 4.5 12 L4.5 13 C4.5 14.5 6 15 8 15Z" fill="#f5c800"/></svg>
<div class="a" style="left:30px;top:9px;font-size:11.5px;line-height:13px;color:#000">C:\WINDOWS\py.exe</div>
<div class="a" style="left:534px;top:14px;width:10px;height:1px;background:#000"></div>
<div class="a" style="left:579px;top:9px;width:10px;height:10px;border:1px solid #000"></div>
<svg class="a" style="left:624px;top:8px" width="12" height="12"><line x1="1" y1="1" x2="11" y2="11" stroke="#000" stroke-width="1.1"/><line x1="11" y1="1" x2="1" y2="11" stroke="#000" stroke-width="1.1"/></svg>
<div class="a" style="left:636px;top:30px;width:17px;height:130px;background:#f0f0f0"></div>
<svg class="a" style="left:639px;top:35px" width="11" height="8"><polyline points="1.5,6 5.5,2 9.5,6" fill="none" stroke="#606060" stroke-width="1.6"/></svg>
<svg class="a" style="left:639px;top:147px" width="11" height="8"><polyline points="1.5,2 5.5,6 9.5,2" fill="none" stroke="#606060" stroke-width="1.6"/></svg>
<div class="a" style="left:637px;top:49px;width:15px;height:17px;background:#cdcdcd"></div>
<pre class="a mono" style="left:0px;top:31px;margin:0;font-size:13.333px;line-height:16px;color:#d0d0d0;white-space:pre">

star HR 1346/54 Gam Tau/HD 27371/SAO 93868 (Bright Star Catalogue):
common name(s): Hyadum I
RA(2000)=4h 19m 47.6s DEC(2000)=15d 37m 39s MAGN=3.65 SP=K0-IIIabCN1 B-V=+0.99
RA=4h 20m 50.2s DEC=15d 40m 15s AZ=233.03d ALT=42.85d
variable (VarID=1553)
RISE: 8h 2m  CULM: 15h 31m  SET: 22h 59m</pre>
</div>
<div class="a" style="left:821px;top:31px;width:16px;height:640px;background:#ebebeb"></div>
<div class="a" style="left:821px;top:31px;width:16px;height:17px;background:#f0f0f0;border-right:1px solid #5a5a5a;border-bottom:1px solid #5a5a5a;border-top:1px solid #fff;border-left:1px solid #fff"><div class="a" style="left:3.5px;top:5px;width:0;height:0;border-left:3.5px solid transparent;border-right:3.5px solid transparent;border-bottom:4px solid #000"></div></div>
<div class="a" style="left:821px;top:654px;width:16px;height:17px;background:#f0f0f0;border-right:1px solid #5a5a5a;border-bottom:1px solid #5a5a5a;border-top:1px solid #fff;border-left:1px solid #fff"><div class="a" style="left:3px;top:5px;width:0;height:0;border-left:4px solid transparent;border-right:4px solid transparent;border-top:4px solid #000"></div></div>
<div class="a" style="left:821px;top:394px;width:16px;height:22px;background:#f0f0f0;border-right:1px solid #5a5a5a;border-bottom:1px solid #5a5a5a;border-top:1px solid #fff;border-left:1px solid #fff"></div>
<div class="a" style="left:1px;top:671px;width:836px;height:16px;background:#ebebeb"></div>
<div class="a" style="left:1px;top:671px;width:17px;height:16px;background:#f0f0f0;border-right:1px solid #5a5a5a;border-bottom:1px solid #5a5a5a;border-top:1px solid #fff;border-left:1px solid #fff"><div class="a" style="left:5px;top:3px;width:0;height:0;border-top:4px solid transparent;border-bottom:4px solid transparent;border-right:4px solid #000"></div></div>
<div class="a" style="left:821px;top:671px;width:16px;height:16px;background:#f0f0f0;border-right:1px solid #5a5a5a;border-bottom:1px solid #5a5a5a;border-top:1px solid #fff;border-left:1px solid #fff"><div class="a" style="left:5px;top:3px;width:0;height:0;border-top:4px solid transparent;border-bottom:4px solid transparent;border-left:4px solid #000"></div></div>
<div class="a" style="left:499px;top:671px;width:38px;height:16px;background:#f0f0f0;border-right:1px solid #5a5a5a;border-bottom:1px solid #5a5a5a;border-top:1px solid #fff;border-left:1px solid #fff"></div>
<div class="a" style="left:0;top:0;width:838px;height:31px;background:#fff"></div>
<svg class="a" style="left:9px;top:7px" width="16" height="16" viewBox="0 0 16 16"><rect width="16" height="16" fill="#000"/><g stroke="#ffee00" stroke-width="1.3"><line x1="8" y1="0" x2="8" y2="3"/><line x1="0" y1="8" x2="3" y2="8"/><line x1="1.5" y1="1.5" x2="4" y2="4"/><line x1="14.5" y1="1.5" x2="12" y2="4"/><line x1="1.5" y1="14.5" x2="4" y2="12"/><line x1="14.5" y1="14.5" x2="12" y2="12"/><line x1="8" y1="13" x2="8" y2="16"/><line x1="13" y1="8" x2="16" y2="8"/></g><circle cx="8" cy="8" r="5.5" fill="#ffee00"/><circle cx="9" cy="8.5" r="4.8" fill="#808080"/></svg>
<div class="a" style="left:30px;top:9px;font-size:11px;line-height:13px;color:#000">PyStars</div>
<div class="a" style="left:718px;top:15px;width:10px;height:1px;background:#000"></div>
<div class="a" style="left:763px;top:10px;width:10px;height:10px;border:1px solid #000"></div>
<svg class="a" style="left:808px;top:9px" width="12" height="12"><line x1="1" y1="1" x2="11" y2="11" stroke="#000" stroke-width="1.1"/><line x1="11" y1="1" x2="1" y2="11" stroke="#000" stroke-width="1.1"/></svg>
<div class="a" style="left:0;top:0;width:838px;height:688px;border:1px solid #1883d7;pointer-events:none"></div>
</body></html>
